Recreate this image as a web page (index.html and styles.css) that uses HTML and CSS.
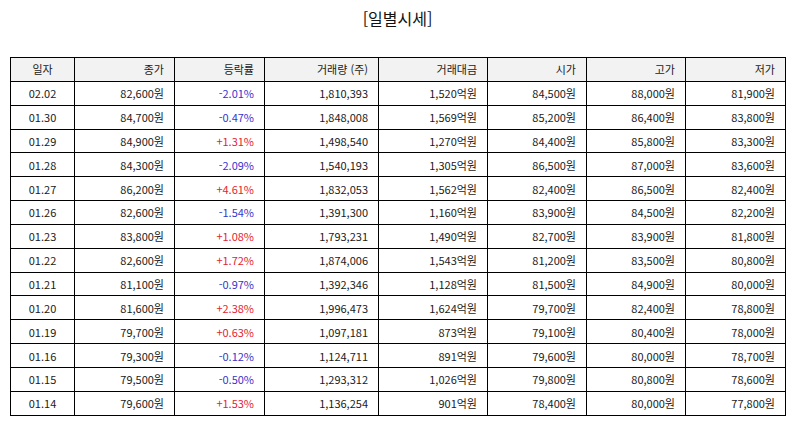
FILE: index.html
```html
<!DOCTYPE html>
<html lang="ko">
<head>
<meta charset="utf-8">
<title>일별시세</title>
<link rel="stylesheet" href="styles.css">
</head>
<body>
<div class="page">
  <h2 class="title">[일별시세]</h2>
  <table class="quotes">
    <colgroup>
      <col class="c-date"><col class="c-close"><col class="c-rate"><col class="c-vol"><col class="c-amt"><col class="c-open"><col class="c-high"><col class="c-low">
    </colgroup>
    <thead>
      <tr><th class="center">일자</th><th>종가</th><th>등락률</th><th>거래량 (주)</th><th>거래대금</th><th>시가</th><th>고가</th><th>저가</th></tr>
    </thead>
    <tbody>
      <tr><td class="center">02.02</td><td>82,600원</td><td class="down">-2.01%</td><td>1,810,393</td><td>1,520억원</td><td>84,500원</td><td>88,000원</td><td>81,900원</td></tr>
      <tr><td class="center">01.30</td><td>84,700원</td><td class="down">-0.47%</td><td>1,848,008</td><td>1,569억원</td><td>85,200원</td><td>86,400원</td><td>83,800원</td></tr>
      <tr><td class="center">01.29</td><td>84,900원</td><td class="up">+1.31%</td><td>1,498,540</td><td>1,270억원</td><td>84,400원</td><td>85,800원</td><td>83,300원</td></tr>
      <tr><td class="center">01.28</td><td>84,300원</td><td class="down">-2.09%</td><td>1,540,193</td><td>1,305억원</td><td>86,500원</td><td>87,000원</td><td>83,600원</td></tr>
      <tr><td class="center">01.27</td><td>86,200원</td><td class="up">+4.61%</td><td>1,832,053</td><td>1,562억원</td><td>82,400원</td><td>86,500원</td><td>82,400원</td></tr>
      <tr><td class="center">01.26</td><td>82,600원</td><td class="down">-1.54%</td><td>1,391,300</td><td>1,160억원</td><td>83,900원</td><td>84,500원</td><td>82,200원</td></tr>
      <tr><td class="center">01.23</td><td>83,800원</td><td class="up">+1.08%</td><td>1,793,231</td><td>1,490억원</td><td>82,700원</td><td>83,900원</td><td>81,800원</td></tr>
      <tr><td class="center">01.22</td><td>82,600원</td><td class="up">+1.72%</td><td>1,874,006</td><td>1,543억원</td><td>81,200원</td><td>83,500원</td><td>80,800원</td></tr>
      <tr><td class="center">01.21</td><td>81,100원</td><td class="down">-0.97%</td><td>1,392,346</td><td>1,128억원</td><td>81,500원</td><td>84,900원</td><td>80,000원</td></tr>
      <tr><td class="center">01.20</td><td>81,600원</td><td class="up">+2.38%</td><td>1,996,473</td><td>1,624억원</td><td>79,700원</td><td>82,400원</td><td>78,800원</td></tr>
      <tr><td class="center">01.19</td><td>79,700원</td><td class="up">+0.63%</td><td>1,097,181</td><td>873억원</td><td>79,100원</td><td>80,400원</td><td>78,000원</td></tr>
      <tr><td class="center">01.16</td><td>79,300원</td><td class="down">-0.12%</td><td>1,124,711</td><td>891억원</td><td>79,600원</td><td>80,000원</td><td>78,700원</td></tr>
      <tr><td class="center">01.15</td><td>79,500원</td><td class="down">-0.50%</td><td>1,293,312</td><td>1,026억원</td><td>79,800원</td><td>80,800원</td><td>78,600원</td></tr>
      <tr><td class="center">01.14</td><td>79,600원</td><td class="up">+1.53%</td><td>1,136,254</td><td>901억원</td><td>78,400원</td><td>80,000원</td><td>77,800원</td></tr>
    </tbody>
  </table>
</div>
</body>
</html>
```

FILE: styles.css
```css
html, body {
  margin: 0;
  padding: 0;
  background: #ffffff;
}

body {
  font-family: "Noto Sans CJK KR", "Noto Sans", sans-serif;
  color: #1a1a1a;
}

.page {
  padding: 0 10px;
}

.title {
  margin: 0;
  padding-top: 6px;
  height: 57px;
  box-sizing: border-box;
  font-size: 16px;
  font-weight: normal;
  line-height: 24px;
  text-align: center;
  color: #111111;
}

.quotes {
  border-collapse: collapse;
  table-layout: fixed;
  width: 775px;
  font-size: 11px;
}

.c-date { width: 64px; }
.c-close { width: 100px; }
.c-rate { width: 90px; }
.c-vol { width: 114px; }
.c-amt { width: 109px; }
.c-open { width: 99px; }
.c-high { width: 99px; }
.c-low { width: 100px; }

.quotes th,
.quotes td {
  border: 1px solid #000000;
  height: 22px;
  padding: 0 10px 0 4px;
  text-align: right;
  line-height: 22px;
  white-space: nowrap;
}

.quotes th {
  background: #f2f2f2;
  font-weight: normal;
}

.quotes tr {
  height: 23.85px;
}

.quotes .center {
  text-align: center;
  padding: 0;
}

.quotes .down {
  color: #3535cc;
}

.quotes .up {
  color: #e4232f;
}
```
